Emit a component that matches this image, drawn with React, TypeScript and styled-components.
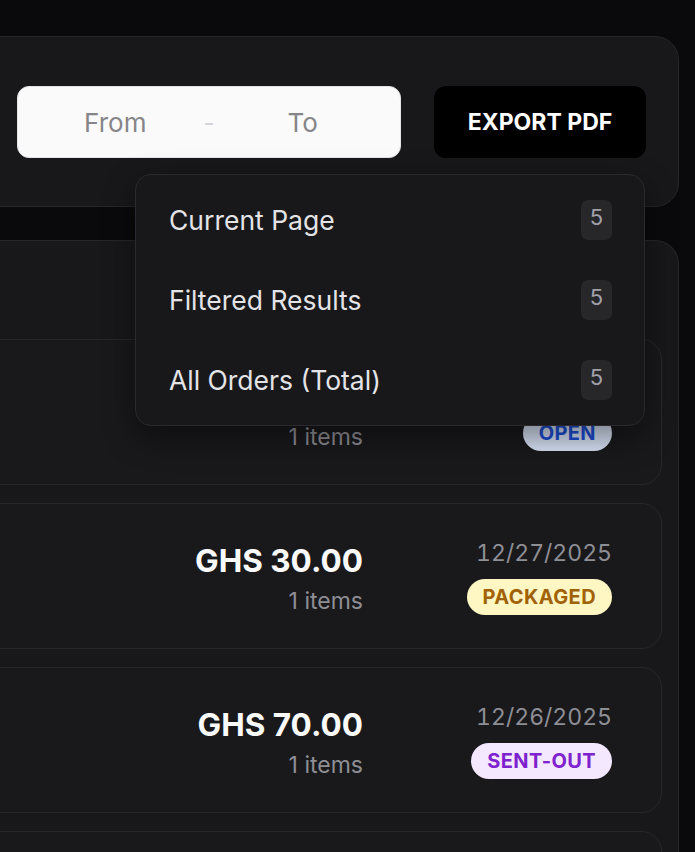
import React from 'react';
import styled, { createGlobalStyle } from 'styled-components';

const GlobalStyle = createGlobalStyle`
  html, body {
    margin: 0;
    padding: 0;
    background: #0a0a0c;
    overflow: hidden;
  }
  body {
    font-family: Inter, 'Noto Sans', sans-serif;
    -webkit-font-smoothing: antialiased;
  }
  * {
    box-sizing: border-box;
  }
`;

const Page = styled.div`
  width: 735px;
  height: 852px;
  overflow: hidden;
  margin-left: -40px;
  padding: 36px 16px 0 0;
  display: flex;
  flex-direction: column;
  gap: 33px;
`;

const FilterCard = styled.div`
  flex-shrink: 0;
  background: #18181b;
  border: 1px solid #27272a;
  border-radius: 24px;
  padding: 49px 32px 48px 56px;
  display: flex;
  align-items: center;
  justify-content: flex-end;
  gap: 33px;
`;

const DateRange = styled.div`
  width: 386px;
  height: 72px;
  background: #fafafa;
  border: 1px solid #e4e4e7;
  border-radius: 12px;
  padding: 0 16px;
  display: flex;
  align-items: center;
`;

const DateField = styled.span`
  flex: 1;
  text-align: center;
  font-size: 26px;
  color: #85858a;
`;

const DateDash = styled.span`
  width: 25px;
  text-align: center;
  font-size: 24px;
  color: #d4d4d8;
`;

const ExportWrap = styled.div`
  position: relative;
`;

const ExportButton = styled.button`
  width: 212px;
  height: 72px;
  background: #000;
  color: #fff;
  border: none;
  border-radius: 12px;
  font-family: inherit;
  font-size: 23px;
  font-weight: 700;
  cursor: pointer;
`;

const Menu = styled.div`
  position: absolute;
  top: calc(100% + 16px);
  right: 1px;
  width: 510px;
  background: #18181b;
  border: 1px solid #2a2a2e;
  border-radius: 16px;
  padding: 5px 0;
  box-shadow: 0 12px 32px rgba(0, 0, 0, 0.45);
  z-index: 10;
`;

const MenuItem = styled.div`
  height: 80px;
  padding: 0 32px 0 33px;
  display: flex;
  align-items: center;
  justify-content: space-between;
  font-size: 26.5px;
  color: #e4e4e7;
`;

const Count = styled.span`
  min-width: 31px;
  height: 40px;
  border-radius: 7px;
  background: #27272a;
  color: #a1a1aa;
  font-size: 22px;
  display: flex;
  justify-content: center;
  padding-top: 4px;
`;

const ListPanel = styled.div`
  flex: 1;
  background: #18181b;
  border: 1px solid #27272a;
  border-bottom: none;
  border-radius: 24px 24px 0 0;
  padding: 98px 16px 0 16px;
  display: flex;
  flex-direction: column;
  gap: 18px;
`;

const OrderCard = styled.div`
  flex-shrink: 0;
  height: 146px;
  background: #19191c;
  border: 1px solid #27272a;
  border-radius: 20px;
  padding: 0 49px 33px 24px;
  display: flex;
  align-items: flex-end;
  justify-content: flex-end;
  gap: 49px;
`;

const AmountCol = styled.div`
  display: flex;
  flex-direction: column;
  align-items: flex-end;
  gap: 7px;
`;

const Amount = styled.div`
  font-size: 31.5px;
  line-height: 38px;
  font-weight: 700;
  color: #fafafa;
`;

const Muted = styled.div<{ $tabular?: boolean }>`
  font-size: 23px;
  line-height: 28px;
  color: #8e8e95;
  font-variant-numeric: ${p => (p.$tabular ? 'tabular-nums' : 'normal')};
`;

const StatusCol = styled.div`
  width: 200px;
  display: flex;
  flex-direction: column;
  align-items: flex-end;
  gap: 12px;
`;

const badgeColors = {
  open: { bg: '#d9e3f6', fg: '#1d4ed8' },
  packaged: { bg: '#fef6c3', fg: '#a16207' },
  'sent-out': { bg: '#f3e8ff', fg: '#7e22ce' },
} as const;

type Status = keyof typeof badgeColors;

const Badge = styled.span<{ $status: Status }>`
  height: 36px;
  padding: 0 16px;
  border-radius: 18px;
  display: inline-flex;
  align-items: center;
  font-size: 20px;
  font-weight: 700;
  letter-spacing: 0.4px;
  text-transform: uppercase;
  background: ${p => badgeColors[p.$status].bg};
  color: ${p => badgeColors[p.$status].fg};
`;

const orders: { amount: string; items: number; date: string; status: Status }[] = [
  { amount: 'GHS 45.00', items: 1, date: '12/28/2025', status: 'open' },
  { amount: 'GHS 30.00', items: 1, date: '12/27/2025', status: 'packaged' },
  { amount: 'GHS 70.00', items: 1, date: '12/26/2025', status: 'sent-out' },
  { amount: 'GHS 25.00', items: 1, date: '12/25/2025', status: 'open' },
];

const exportOptions = [
  { label: 'Current Page', count: 5 },
  { label: 'Filtered Results', count: 5 },
  { label: 'All Orders (Total)', count: 5 },
];

export default function App() {
  return (
    <>
      <GlobalStyle />
      <Page>
        <FilterCard>
          <DateRange>
            <DateField>From</DateField>
            <DateDash>-</DateDash>
            <DateField>To</DateField>
          </DateRange>
          <ExportWrap>
            <ExportButton>EXPORT PDF</ExportButton>
            <Menu>
              {exportOptions.map(o => (
                <MenuItem key={o.label}>
                  <span>{o.label}</span>
                  <Count>{o.count}</Count>
                </MenuItem>
              ))}
            </Menu>
          </ExportWrap>
        </FilterCard>

        <ListPanel>
          {orders.map(o => (
            <OrderCard key={o.date}>
              <AmountCol>
                <Amount>{o.amount}</Amount>
                <Muted>{o.items} items</Muted>
              </AmountCol>
              <StatusCol>
                <Muted $tabular>{o.date}</Muted>
                <Badge $status={o.status}>{o.status}</Badge>
              </StatusCol>
            </OrderCard>
          ))}
        </ListPanel>
      </Page>
    </>
  );
}
